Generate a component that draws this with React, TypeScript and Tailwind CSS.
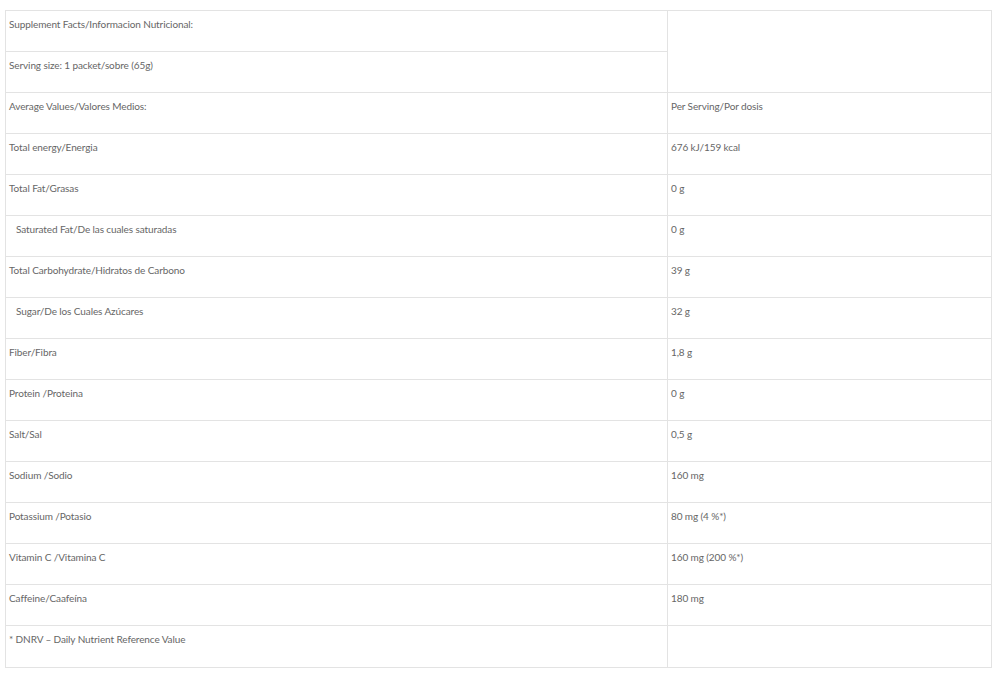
const rows: [string, string, boolean?][] = [
  ['Average Values/Valores Medios:', 'Per Serving/Por dosis'],
  ['Total energy/Energia', '676 kJ/159 kcal'],
  ['Total Fat/Grasas', '0 g'],
  ['Saturated Fat/De las cuales saturadas', '0 g', true],
  ['Total Carbohydrate/Hidratos de Carbono', '39 g'],
  ['Sugar/De los Cuales Azúcares', '32 g', true],
  ['Fiber/Fibra', '1,8 g'],
  ['Protein /Proteina', '0 g'],
  ['Salt/Sal', '0,5 g'],
  ['Sodium /Sodio', '160 mg'],
  ['Potassium /Potasio', '80 mg (4 %*)'],
  ['Vitamin C /Vitamina C', '160 mg (200 %*)'],
  ['Caffeine/Caafeína', '180 mg'],
  ['* DNRV – Daily Nutrient Reference Value', ''],
];

const cell = 'border border-[#e3e3e3] h-[41px] align-top pt-[6px] pr-[3px] text-left font-normal';

export default function App() {
  return (
    <div className="min-h-screen bg-white pt-[10px] pl-[5px] pr-[8px]" style={{ fontFamily: 'Lato, "Open Sans", sans-serif' }}>
      <table className="w-[987px] border-collapse text-[10px] leading-[14px] tracking-[-0.1px] text-[#666]">
        <tbody>
          <tr>
            <td className={`${cell} pl-[3px] w-[662px]`}>Supplement Facts/Informacion Nutricional:</td>
            <td className={`${cell} pl-[3px]`} rowSpan={2}></td>
          </tr>
          <tr>
            <td className={`${cell} pl-[3px]`}>Serving size: 1 packet/sobre (65g)</td>
          </tr>
          {rows.map(([label, value, indent], i) => (
            <tr key={i} className={i === rows.length - 1 ? 'h-[42px]' : ''}>
              <td className={`${cell} ${indent ? 'pl-[10px]' : 'pl-[3px]'}`}>{label}</td>
              <td className={`${cell} pl-[3px]`}>{value}</td>
            </tr>
          ))}
        </tbody>
      </table>
    </div>
  );
}
